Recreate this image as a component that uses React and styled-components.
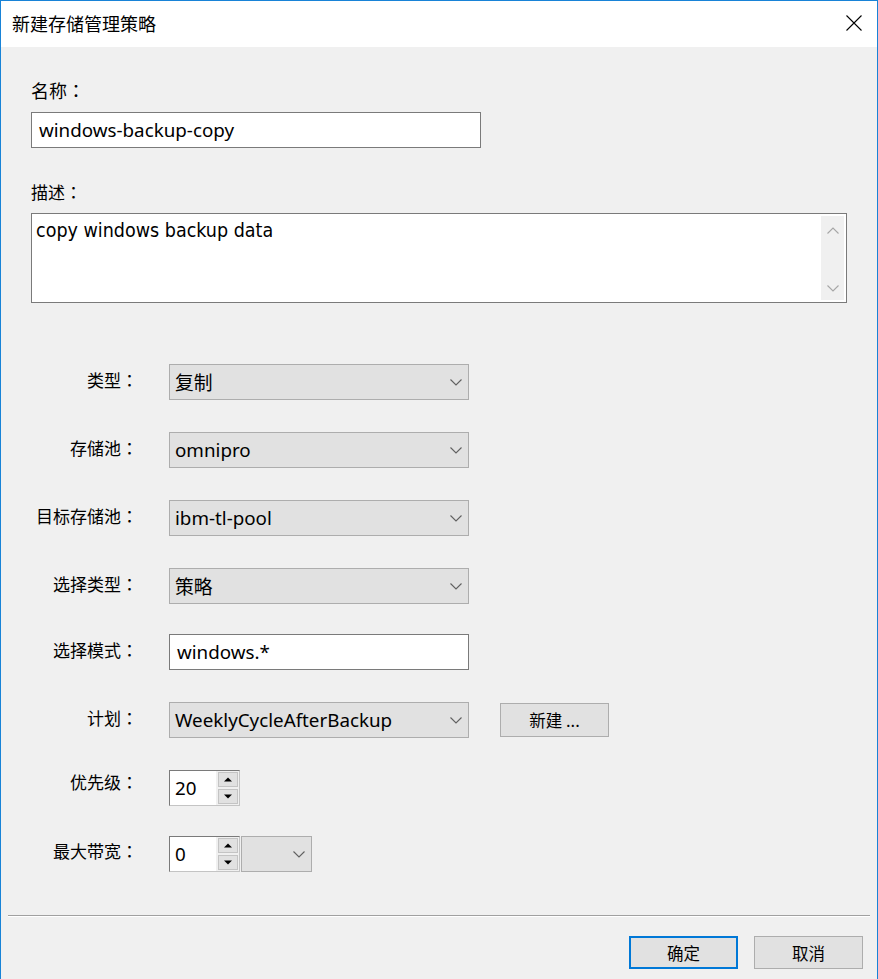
import React from "react";
import styled, { createGlobalStyle } from "styled-components";

const GlobalStyle = createGlobalStyle`
  html, body {
    margin: 0;
    padding: 0;
    background: #ffffff;
  }
  body {
    font-family: "Noto Sans", "Noto Sans CJK SC", sans-serif;
    color: #000;
  }
  * { box-sizing: border-box; }
`;

const Window = styled.div`
  width: 878px;
  height: 979px;
  display: flex;
  flex-direction: column;
  background: #f0f0f0;
  border: 1px solid #1883d7;
  border-bottom: none;
`;

const TitleBar = styled.div`
  height: 46px;
  flex: none;
  background: #ffffff;
  display: flex;
  align-items: center;
  justify-content: space-between;
  padding: 0 15px 2px 11px;
`;

const Title = styled.div`
  font-family: "Noto Sans CJK SC", sans-serif;
  font-size: 18px;
  line-height: 24px;
`;

const Close = styled.button`
  border: none;
  background: transparent;
  padding: 0;
  width: 16px;
  height: 16px;
  display: flex;
`;

const Content = styled.div`
  padding: 31px 29px 0 30px;
  display: flex;
  flex-direction: column;
  align-items: flex-start;
`;

const TopLabel = styled.div`
  font-family: "Noto Sans CJK SC", sans-serif;
  font-size: ${(p) => p.$size || 17}px;
  line-height: 24px;
  margin-top: ${(p) => p.$mt || 0}px;
`;

const Colon = styled.span`
  font-family: "Noto Sans CJK TC", sans-serif;
`;

const TextBox = styled.div`
  width: ${(p) => p.$w}px;
  height: 36px;
  margin-top: ${(p) => p.$mt || 0}px;
  background: #ffffff;
  border: 1px solid #7a7a7a;
  display: flex;
  align-items: center;
  padding-left: ${(p) => p.$pl || 7}px;
  font-size: 18.8px;
  white-space: nowrap;
`;

const Memo = styled.div`
  width: 816px;
  height: 90px;
  margin-top: 9px;
  background: #ffffff;
  border: 1px solid #7a7a7a;
  display: flex;
  justify-content: space-between;
  padding: 2px 2px 2px 4px;
`;

const MemoText = styled.div`
  font-family: "DejaVu Sans Condensed", "DejaVu Sans", sans-serif;
  font-stretch: condensed;
  font-size: 19.5px;
  line-height: 24px;
  padding-top: 3px;
`;

const ScrollTrack = styled.div`
  width: 23px;
  background: #f0f0f0;
  display: flex;
  flex-direction: column;
  justify-content: space-between;
  align-items: center;
  padding: 11px 0 8px;
`;

const Form = styled.div`
  margin-top: 61px;
  display: flex;
  flex-direction: column;
`;

const Row = styled.div`
  display: grid;
  grid-template-columns: 107px auto;
  column-gap: 31px;
  align-items: center;
  height: 36px;
  margin-top: ${(p) => p.$mt || 0}px;
`;

const RowLabel = styled.div`
  justify-self: end;
  font-family: "Noto Sans CJK SC", sans-serif;
  font-size: 17px;
  line-height: 24px;
  white-space: nowrap;
  padding-bottom: ${(p) => p.$pb || 4}px;
`;

const Controls = styled.div`
  display: flex;
  align-items: center;
  gap: ${(p) => p.$gap || 0}px;
`;

const Combo = styled.div`
  width: ${(p) => p.$w}px;
  height: 36px;
  background: #e1e1e1;
  border: 1px solid #adadad;
  display: flex;
  align-items: center;
  justify-content: space-between;
  padding: 0 6px 0 5px;
  font-size: 18.8px;
  white-space: nowrap;
`;

const Button = styled.button`
  width: 109px;
  height: ${(p) => p.$h || 34}px;
  background: #e1e1e1;
  border: ${(p) => (p.$primary ? "2px solid #0078d7" : "1px solid #adadad")};
  font-family: "Noto Sans CJK SC", sans-serif;
  font-size: 16.5px;
  color: #000;
  padding: 0;
  display: flex;
  align-items: center;
  justify-content: center;
`;

const Spin = styled.div`
  display: flex;
  height: 36px;
  width: 71px;
  border: 1px solid;
  border-color: #7a7a7a #c4c4c4 #c4c4c4 #7a7a7a;
  background: #f0f0f0;
`;

const SpinText = styled.div`
  width: 46px;
  background: #ffffff;
  display: flex;
  align-items: center;
  padding-left: 5px;
  font-size: 18.8px;
`;

const SpinButtons = styled.div`
  flex: 1;
  display: flex;
  flex-direction: column;
  justify-content: center;
  gap: 2px;
  padding: 1px 1px 1px 2px;
`;

const SpinButton = styled.div`
  height: 15px;
  background: #e1e1e1;
  border: 1px solid #c4c4c4;
  display: flex;
  align-items: center;
  justify-content: center;
`;

const Footer = styled.div`
  margin-top: auto;
  display: flex;
  flex-direction: column;
  padding-bottom: 10px;
`;

const Separator = styled.div`
  margin: 0 7px;
  height: 2px;
  border-top: 1px solid #a0a0a0;
  border-bottom: 1px solid #ffffff;
`;

const ButtonBar = styled.div`
  display: flex;
  justify-content: flex-end;
  gap: 16px;
  padding: 19px 14px 0 0;
`;

const Chevron = ({ color = "#606060", up }) => (
  <svg width="12" height="7" viewBox="0 0 12 7">
    <polyline
      points={up ? "0.5,6.5 6,1 11.5,6.5" : "0.5,0.5 6,6 11.5,0.5"}
      fill="none"
      stroke={color}
      strokeWidth="1.1"
    />
  </svg>
);

const Triangle = ({ up }) => (
  <svg width="8" height="5" viewBox="0 0 8 5">
    <polygon points={up ? "0,4.5 4,0.5 8,4.5" : "0,0.5 8,0.5 4,4.5"} fill="#000" />
  </svg>
);

const Spinner = ({ value }) => (
  <Spin>
    <SpinText>{value}</SpinText>
    <SpinButtons>
      <SpinButton>
        <Triangle up />
      </SpinButton>
      <SpinButton>
        <Triangle />
      </SpinButton>
    </SpinButtons>
  </Spin>
);

const ComboBox = ({ value, w = 300 }) => (
  <Combo $w={w}>
    <span>{value}</span>
    <Chevron />
  </Combo>
);

const Label = ({ text, pb }) => (
  <RowLabel $pb={pb}>
    {text}
    <Colon>：</Colon>
  </RowLabel>
);

export default function App() {
  return (
    <>
      <GlobalStyle />
      <Window>
        <TitleBar>
          <Title>新建存储管理策略</Title>
          <Close aria-label="关闭">
            <svg width="16" height="16" viewBox="0 0 16 16">
              <path d="M0.5 0.5 L15.5 15.5 M15.5 0.5 L0.5 15.5" stroke="#000" strokeWidth="1.1" />
            </svg>
          </Close>
        </TitleBar>
        <Content>
          <TopLabel $size={18}>
            名称<Colon>：</Colon>
          </TopLabel>
          <TextBox $w={450} $mt={10}>windows-backup-copy</TextBox>
          <TopLabel $mt={32}>
            描述<Colon>：</Colon>
          </TopLabel>
          <Memo>
            <MemoText>copy windows backup data</MemoText>
            <ScrollTrack>
              <Chevron color="#a6a6a6" up />
              <Chevron color="#a6a6a6" />
            </ScrollTrack>
          </Memo>
          <Form>
            <Row>
              <Label text="类型" />
              <ComboBox value="复制" />
            </Row>
            <Row $mt={32}>
              <Label text="存储池" />
              <ComboBox value="omnipro" />
            </Row>
            <Row $mt={32}>
              <Label text="目标存储池" />
              <ComboBox value="ibm-tl-pool" />
            </Row>
            <Row $mt={32}>
              <Label text="选择类型" />
              <ComboBox value="策略" />
            </Row>
            <Row $mt={30}>
              <Label text="选择模式" />
              <TextBox $w={300}>windows.*</TextBox>
            </Row>
            <Row $mt={32}>
              <Label text="计划" />
              <Controls $gap={31}>
                <ComboBox value="WeeklyCycleAfterBackup" />
                <Button>新建 ...</Button>
              </Controls>
            </Row>
            <Row $mt={32}>
              <Label text="优先级" pb={12} />
              <Controls>
                <Spinner value="20" />
              </Controls>
            </Row>
            <Row $mt={30}>
              <Label text="最大带宽" pb={6} />
              <Controls $gap={1}>
                <Spinner value="0" />
                <ComboBox value="" w={71} />
              </Controls>
            </Row>
          </Form>
        </Content>
        <Footer>
          <Separator />
          <ButtonBar>
            <Button $primary $h={33}>确定</Button>
            <Button $h={33}>取消</Button>
          </ButtonBar>
        </Footer>
      </Window>
    </>
  );
}
